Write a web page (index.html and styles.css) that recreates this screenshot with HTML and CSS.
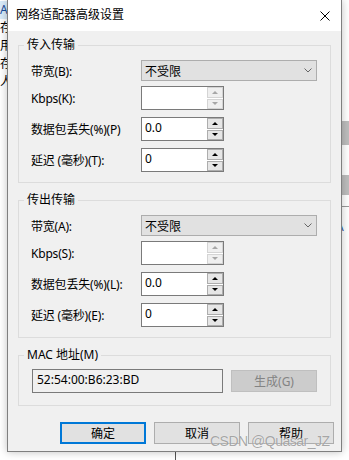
FILE: index.html
```html
<!DOCTYPE html>
<html lang="zh-CN">
<head>
    <meta charset="UTF-8">
    <title>网络适配器高级设置</title>
    <link rel="stylesheet" href="styles.css">
</head>
<body>

    <!-- windows behind the dialog -->
    <div class="backdrop">
        <div class="back-left">
            <span class="sel">A</span>
            <span>存在</span>
            <span>用动</span>
            <span>存在</span>
            <span>人</span>
        </div>
        <div class="back-line"></div>
        <div class="back-space"></div>
        <div class="back-right">
            <span class="r1">数</span>
            <span class="r2 dim">刷</span>
            <span class="r3">享</span>
            <span class="r4">机</span>
            <span class="r5">网</span>
            <div class="bar bar1"></div>
            <div class="bar bar2"></div>
            <div class="hline"></div>
            <span class="r6">LA</span>
        </div>
    </div>

    <div class="dialog">
        <div class="titlebar">
            <span class="title">网络适配器高级设置</span>
            <svg class="close" width="10" height="10" viewBox="0 0 10 10">
                <path d="M0.5 0.5 L9.5 9.5 M9.5 0.5 L0.5 9.5" stroke="#000" stroke-width="1" fill="none"/>
            </svg>
        </div>

        <fieldset class="group">
            <legend>传入传输</legend>
            <div class="row row-select">
                <label>带宽(B):</label>
                <div class="select"><span>不受限</span>
                    <svg width="8" height="5" viewBox="0 0 8 5"><path d="M0.5 0.5 L4 4 L7.5 0.5" stroke="#666" fill="none"/></svg>
                </div>
            </div>
            <div class="row">
                <label>Kbps(K):</label>
                <div class="spin disabled"><span class="val"></span>
                    <div class="btns"><i class="up"></i><i class="down"></i></div>
                </div>
            </div>
            <div class="row">
                <label>数据包丢失(%)(P)</label>
                <div class="spin"><span class="val">0.0</span>
                    <div class="btns"><i class="up"></i><i class="down"></i></div>
                </div>
            </div>
            <div class="row">
                <label>延迟 (毫秒)(T):</label>
                <div class="spin"><span class="val">0</span>
                    <div class="btns"><i class="up"></i><i class="down"></i></div>
                </div>
            </div>
        </fieldset>

        <fieldset class="group group-next">
            <legend>传出传输</legend>
            <div class="row row-select">
                <label>带宽(A):</label>
                <div class="select"><span>不受限</span>
                    <svg width="8" height="5" viewBox="0 0 8 5"><path d="M0.5 0.5 L4 4 L7.5 0.5" stroke="#666" fill="none"/></svg>
                </div>
            </div>
            <div class="row">
                <label>Kbps(S):</label>
                <div class="spin disabled"><span class="val"></span>
                    <div class="btns"><i class="up"></i><i class="down"></i></div>
                </div>
            </div>
            <div class="row">
                <label>数据包丢失(%)(L):</label>
                <div class="spin"><span class="val">0.0</span>
                    <div class="btns"><i class="up"></i><i class="down"></i></div>
                </div>
            </div>
            <div class="row">
                <label>延迟 (毫秒)(E):</label>
                <div class="spin"><span class="val">0</span>
                    <div class="btns"><i class="up"></i><i class="down"></i></div>
                </div>
            </div>
        </fieldset>

        <fieldset class="group group-next group-mac">
            <legend>MAC 地址(M)</legend>
            <div class="mac-row">
                <div class="mac">52:54:00:B6:23:BD</div>
                <button class="btn btn-off">生成(G)</button>
            </div>
        </fieldset>

        <div class="footer">
            <button class="btn btn-default">确定</button>
            <button class="btn">取消</button>
            <button class="btn">帮助</button>
        </div>
    </div>

    <div class="watermark">CSDN @Quasar_JZ</div>

</body>
</html>
```

FILE: styles.css
```css
body {
    margin: 0;
    width: 349px;
    height: 460px;
    overflow: hidden;
    position: relative;
    background: #fff;
    font-family: "Noto Sans", "Noto Sans CJK SC", sans-serif;
    font-size: 12px;
    color: #000;
}
.backdrop {
    display: flex;
    height: 460px;
}
.back-left {
    width: 181px;
    display: flex;
    flex-direction: column;
    padding-top: 1px;
    line-height: 18px;
}
.back-left .sel {
    color: #1b4e9b;
    background: #d9ebf9;
    width: 12px;
}
.back-line {
    width: 1px;
    height: 8px;
    align-self: flex-end;
    background: #555;
}
.back-space {
    width: 160px;
}
.back-right {
    width: 20px;
    display: flex;
    flex-direction: column;
    line-height: 14px;
}
.back-right .r1 { margin-top: 3px; }
.back-right .r2 { margin-top: 9px; }
.back-right .r3 { margin-top: 9px; }
.back-right .r4 { margin-top: 10px; }
.back-right .r5 { margin-top: 9px; }
.back-right .dim { color: #999; }
.bar {
    background: #bdbdbd;
}
.bar1 { height: 24px; margin-top: 11px; }
.bar2 { height: 20px; margin-top: 30px; }
.hline { height: 1px; background: #999; margin-top: 11px; }
.back-right .r6 { margin-top: 13px; color: #1b4e9b; }

.dialog {
    position: absolute;
    left: 7px;
    top: 0;
    width: 333px;
    height: 451px;
    border: 1px solid #7f7f7f;
    border-top: none;
    background: #f0f0f0;
    box-shadow: 0 0 8px rgba(0,0,0,0.25);
    display: flex;
    flex-direction: column;
}
.titlebar {
    height: 31px;
    background: #fff;
    display: flex;
    align-items: center;
    justify-content: space-between;
    padding: 0 11px 0 8px;
    flex-shrink: 0;
}
.title {
    line-height: 16px;
    margin-top: -1px;
}
.group {
    margin: 6px 10px 0;
    padding: 0 13px 10px 12px;
    border: 1px solid #dcdcdc;
    min-width: 0;
}
.group-next {
    margin-top: 9px;
}
.group legend {
    padding: 0 3px;
    margin-left: -7px;
    line-height: 16px;
}
.row {
    display: grid;
    grid-template-columns: 110px 176px;
    align-items: center;
    height: 24px;
    margin-top: 7px;
}
.row-select {
    height: 21px;
}
.row-select + .row {
    margin-top: 5px;
}
.row label {
    white-space: nowrap;
    letter-spacing: -0.2px;
}
.select {
    height: 21px;
    box-sizing: border-box;
    border: 1px solid #adadad;
    background: #e1e1e1;
    display: flex;
    align-items: center;
    justify-content: space-between;
    padding: 0 4px 0 3px;
}
.spin {
    width: 83px;
    height: 24px;
    box-sizing: border-box;
    border: 1px solid #7a7a7a;
    background: #fff;
    display: flex;
    align-items: center;
}
.spin .val {
    flex: 1;
    padding-left: 3px;
    margin-top: -3px;
}
.btns {
    width: 16px;
    height: 22px;
    display: flex;
    flex-direction: column;
    gap: 1px;
}
.btns i {
    flex: 1;
    box-sizing: border-box;
    border: 1px solid #adadad;
    background: #e6e6e6;
    display: flex;
    align-items: center;
    justify-content: center;
}
.btns i::after {
    content: "";
    width: 0;
    height: 0;
    border-left: 3px solid transparent;
    border-right: 3px solid transparent;
}
.btns .up::after {
    border-bottom: 3px solid #000;
}
.btns .down::after {
    border-top: 3px solid #000;
}
.spin.disabled .btns i {
    border-color: #d4d4d4;
    background: #efefef;
}
.spin.disabled .btns .up::after {
    border-bottom-color: #a6a6a6;
}
.spin.disabled .btns .down::after {
    border-top-color: #a6a6a6;
}
.group-mac {
    padding-bottom: 12px;
}
.mac-row {
    display: flex;
    align-items: center;
    justify-content: space-between;
    margin-top: 6px;
}
.mac {
    width: 191px;
    height: 24px;
    box-sizing: border-box;
    margin-left: 1px;
    border: 1px solid #7a7a7a;
    background: #f0f0f0;
    padding-left: 4px;
    line-height: 20px;
}
.btn {
    width: 86px;
    height: 22px;
    box-sizing: border-box;
    border: 1px solid #adadad;
    background: #e1e1e1;
    font-family: inherit;
    font-size: 12px;
    color: #000;
    padding: 0;
    margin: 0;
}
.btn-off {
    background: #cccccc;
    border-color: #bfbfbf;
    color: #838383;
}
.btn-default {
    border: 2px solid #0078d7;
}
.footer {
    display: flex;
    justify-content: flex-end;
    gap: 8px;
    padding-right: 7px;
    margin-top: 16px;
}
.watermark {
    position: absolute;
    left: 210px;
    top: 433px;
    font-family: "Liberation Sans", Arial, sans-serif;
    font-size: 14px;
    color: rgba(110,110,110,0.6);
    text-shadow: 0 0 1px rgba(255,255,255,0.9);
    letter-spacing: -0.5px;
}
```
